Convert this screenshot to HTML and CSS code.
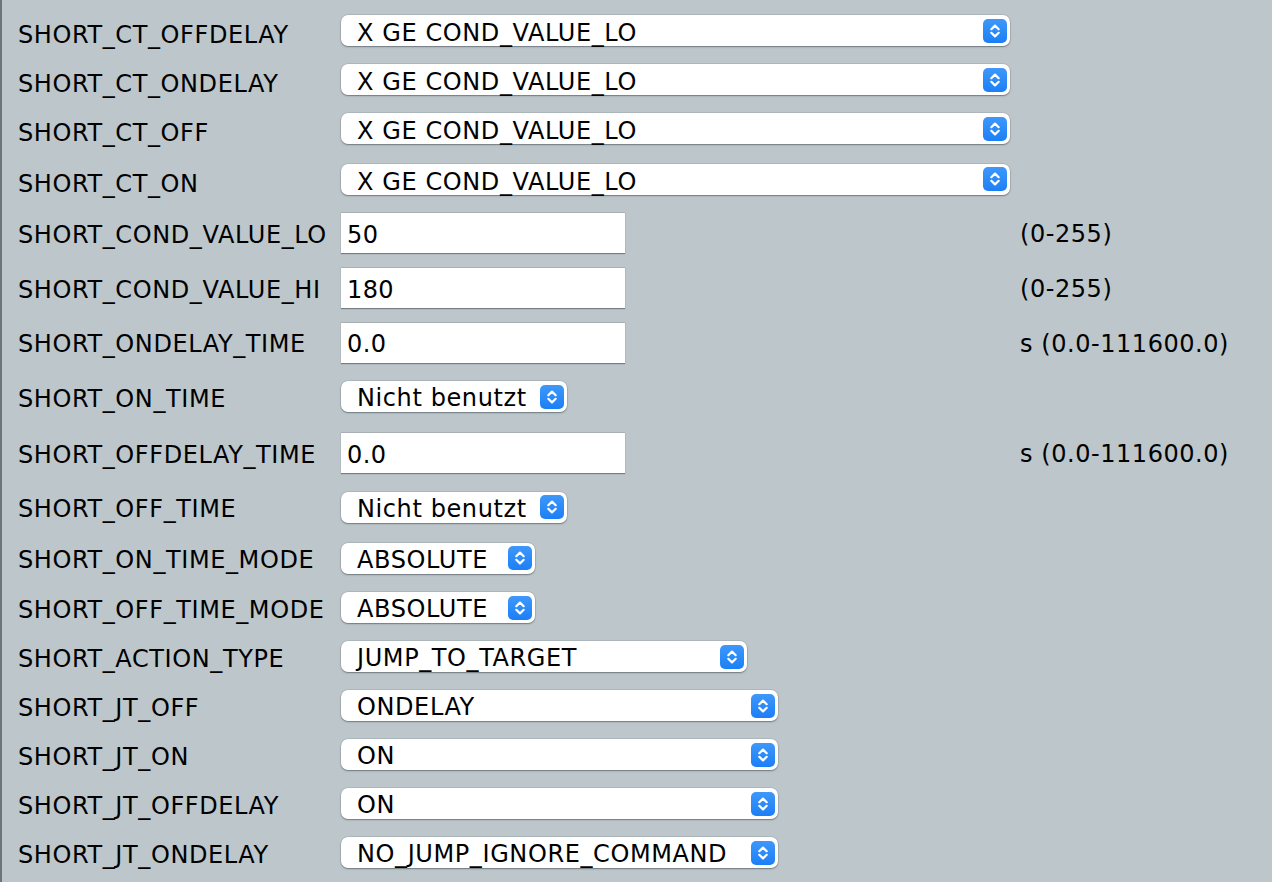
FILE: index.html
```html
<!DOCTYPE html>
<html lang="de">
<head>
<meta charset="utf-8">
<title>Parameter</title>
<link rel="stylesheet" href="styles.css">
</head>
<body>
<div class="page">
  <div class="row h49 top"><div class="label">SHORT_CT_OFFDELAY</div><div class="ctl"><div class="select w-xl"><span>X GE COND_VALUE_LO</span><svg class="arr" viewBox="0 0 24 24"><path d="M8.3 10.2 L12 6.6 L15.7 10.2 M8.3 13.8 L12 17.4 L15.7 13.8"/></svg></div></div><div class="note"></div></div>
  <div class="row h49 top"><div class="label">SHORT_CT_ONDELAY</div><div class="ctl"><div class="select w-xl"><span>X GE COND_VALUE_LO</span><svg class="arr" viewBox="0 0 24 24"><path d="M8.3 10.2 L12 6.6 L15.7 10.2 M8.3 13.8 L12 17.4 L15.7 13.8"/></svg></div></div><div class="note"></div></div>
  <div class="row h49 top"><div class="label">SHORT_CT_OFF</div><div class="ctl"><div class="select w-xl"><span>X GE COND_VALUE_LO</span><svg class="arr" viewBox="0 0 24 24"><path d="M8.3 10.2 L12 6.6 L15.7 10.2 M8.3 13.8 L12 17.4 L15.7 13.8"/></svg></div></div><div class="note"></div></div>
  <div class="row h52 top"><div class="label">SHORT_CT_ON</div><div class="ctl"><div class="select w-xl"><span>X GE COND_VALUE_LO</span><svg class="arr" viewBox="0 0 24 24"><path d="M8.3 10.2 L12 6.6 L15.7 10.2 M8.3 13.8 L12 17.4 L15.7 13.8"/></svg></div></div><div class="note"></div></div>
  <div class="row h55"><div class="label">SHORT_COND_VALUE_LO</div><div class="ctl"><input class="text" type="text" value="50"></div><div class="note">(0-255)</div></div>
  <div class="row h55"><div class="label">SHORT_COND_VALUE_HI</div><div class="ctl"><input class="text" type="text" value="180"></div><div class="note">(0-255)</div></div>
  <div class="row h54"><div class="label">SHORT_ONDELAY_TIME</div><div class="ctl"><input class="text" type="text" value="0.0"></div><div class="note">s (0.0-111600.0)</div></div>
  <div class="row h55"><div class="label">SHORT_ON_TIME</div><div class="ctl"><div class="select w-s"><span>Nicht benutzt</span><svg class="arr" viewBox="0 0 24 24"><path d="M8.3 10.2 L12 6.6 L15.7 10.2 M8.3 13.8 L12 17.4 L15.7 13.8"/></svg></div></div><div class="note"></div></div>
  <div class="row h57"><div class="label">SHORT_OFFDELAY_TIME</div><div class="ctl"><input class="text" type="text" value="0.0"></div><div class="note">s (0.0-111600.0)</div></div>
  <div class="row h52"><div class="label">SHORT_OFF_TIME</div><div class="ctl"><div class="select w-s"><span>Nicht benutzt</span><svg class="arr" viewBox="0 0 24 24"><path d="M8.3 10.2 L12 6.6 L15.7 10.2 M8.3 13.8 L12 17.4 L15.7 13.8"/></svg></div></div><div class="note"></div></div>
  <div class="row h50"><div class="label">SHORT_ON_TIME_MODE</div><div class="ctl"><div class="select w-xs"><span>ABSOLUTE</span><svg class="arr" viewBox="0 0 24 24"><path d="M8.3 10.2 L12 6.6 L15.7 10.2 M8.3 13.8 L12 17.4 L15.7 13.8"/></svg></div></div><div class="note"></div></div>
  <div class="row h49"><div class="label">SHORT_OFF_TIME_MODE</div><div class="ctl"><div class="select w-xs"><span>ABSOLUTE</span><svg class="arr" viewBox="0 0 24 24"><path d="M8.3 10.2 L12 6.6 L15.7 10.2 M8.3 13.8 L12 17.4 L15.7 13.8"/></svg></div></div><div class="note"></div></div>
  <div class="row h49"><div class="label">SHORT_ACTION_TYPE</div><div class="ctl"><div class="select w-m"><span>JUMP_TO_TARGET</span><svg class="arr" viewBox="0 0 24 24"><path d="M8.3 10.2 L12 6.6 L15.7 10.2 M8.3 13.8 L12 17.4 L15.7 13.8"/></svg></div></div><div class="note"></div></div>
  <div class="row h49"><div class="label">SHORT_JT_OFF</div><div class="ctl"><div class="select w-l"><span>ONDELAY</span><svg class="arr" viewBox="0 0 24 24"><path d="M8.3 10.2 L12 6.6 L15.7 10.2 M8.3 13.8 L12 17.4 L15.7 13.8"/></svg></div></div><div class="note"></div></div>
  <div class="row h49"><div class="label">SHORT_JT_ON</div><div class="ctl"><div class="select w-l"><span>ON</span><svg class="arr" viewBox="0 0 24 24"><path d="M8.3 10.2 L12 6.6 L15.7 10.2 M8.3 13.8 L12 17.4 L15.7 13.8"/></svg></div></div><div class="note"></div></div>
  <div class="row h49"><div class="label">SHORT_JT_OFFDELAY</div><div class="ctl"><div class="select w-l"><span>ON</span><svg class="arr" viewBox="0 0 24 24"><path d="M8.3 10.2 L12 6.6 L15.7 10.2 M8.3 13.8 L12 17.4 L15.7 13.8"/></svg></div></div><div class="note"></div></div>
  <div class="row h49"><div class="label">SHORT_JT_ONDELAY</div><div class="ctl"><div class="select w-l"><span>NO_JUMP_IGNORE_COMMAND</span><svg class="arr" viewBox="0 0 24 24"><path d="M8.3 10.2 L12 6.6 L15.7 10.2 M8.3 13.8 L12 17.4 L15.7 13.8"/></svg></div></div><div class="note"></div></div>
</div>
</body>
</html>
```

FILE: styles.css
```css
html, body {
  margin: 0;
  padding: 0;
  height: 100%;
  background: #bcc6cb;
}
body {
  font-family: "DejaVu Sans", Verdana, sans-serif;
  font-size: 24px;
  color: #000;
}
.page {
  box-sizing: border-box;
  min-height: 882px;
  border-left: 2px solid #6f7477;
  padding: 6px 0 0 16px;
}
.row {
  display: grid;
  grid-template-columns: 323px 679px auto;
  align-items: center;
}
.h49 { height: 49px; }
.h50 { height: 50px; }
.h52 { height: 52px; }
.h54 { height: 54px; }
.h55 { height: 55px; }
.h57 { height: 57px; }
.label {
  letter-spacing: 0.6px;
  white-space: nowrap;
  padding-top: 4px;
}
.top .label {
  padding-top: 9px;
}
.note {
  letter-spacing: 0.55px;
  white-space: nowrap;
  padding-top: 3px;
}
.ctl {
  display: flex;
  align-items: center;
}
.select {
  box-sizing: border-box;
  height: 31px;
  background: #fff;
  border-radius: 7px;
  box-shadow: 0 1px 1.5px rgba(60, 70, 75, 0.55), 0 0 0 0.5px rgba(90, 100, 105, 0.25);
  display: flex;
  align-items: center;
  justify-content: space-between;
  padding: 0 3px 0 16px;
  letter-spacing: 0.6px;
  white-space: nowrap;
}
.select span {
  line-height: 27px;
  padding-top: 4px;
}
.top .select span {
  padding-top: 6px;
  line-height: 25px;
}
.w-xl { width: 669px; }
.w-l { width: 437px; }
.w-m { width: 406px; }
.w-s { width: 226px; }
.w-xs { width: 194px; }
.arr {
  width: 24px;
  height: 24px;
  flex: none;
  border-radius: 5px;
  background: linear-gradient(#3f98fa, #1b7ff6);
}
.arr path {
  fill: none;
  stroke: #fff;
  stroke-width: 2.2;
  stroke-linecap: round;
  stroke-linejoin: round;
}
.text {
  box-sizing: border-box;
  width: 284px;
  height: 41px;
  margin: 0;
  border: none;
  border-top: 1px solid #a9b0b4;
  background: #fff;
  box-shadow: 0 1px 1px rgba(60, 70, 75, 0.55);
  font-family: "DejaVu Sans", Verdana, sans-serif;
  font-size: 24px;
  letter-spacing: 0.4px;
  padding: 3px 6px 0;
  color: #000;
  outline: none;
}
```
